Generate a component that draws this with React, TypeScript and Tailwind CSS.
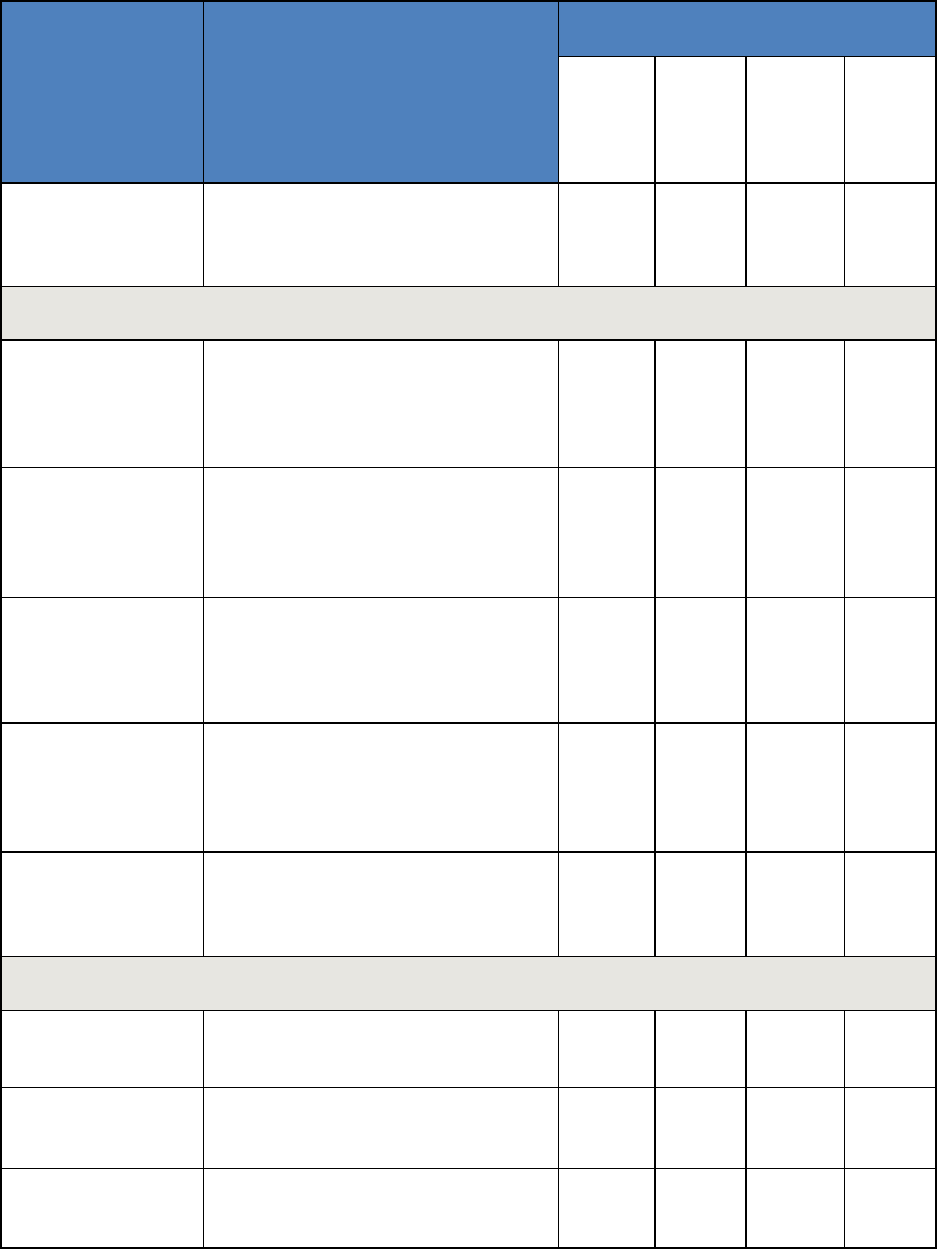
const rows: Array<{ h: string; section?: boolean; thick?: boolean }> = [
  { h: 'h-[103px]' },
  { h: 'h-[54px]', section: true, thick: true },
  { h: 'h-[127px]' },
  { h: 'h-[130px]' },
  { h: 'h-[126px]', thick: true },
  { h: 'h-[129px]', thick: true },
  { h: 'h-[104px]' },
  { h: 'h-[54px]', section: true },
  { h: 'h-[77px]' },
  { h: 'h-[81px]' },
  { h: 'h-[80px]', thick: true },
]

export default function App() {
  return (
    <div className="bg-white w-[937px] h-[1250px] font-['Liberation_Sans',sans-serif]">
      <table className="table-fixed border-collapse w-[936px] border-2 border-black">
        <colgroup>
          <col className="w-[202px]" />
          <col className="w-[355px]" />
          <col className="w-[97px]" />
          <col className="w-[91px]" />
          <col className="w-[98px]" />
          <col className="w-[92px]" />
        </colgroup>
        <thead>
          <tr className="h-[55px]">
            <th rowSpan={2} className="bg-[#4f81bd] border border-black border-b-2"></th>
            <th rowSpan={2} className="bg-[#4f81bd] border border-black border-b-2"></th>
            <th colSpan={4} className="bg-[#4f81bd] border border-black"></th>
          </tr>
          <tr className="h-[127px]">
            <th className="border border-black border-b-2 border-r-2"></th>
            <th className="border border-black border-b-2 border-r-2"></th>
            <th className="border border-black border-b-2"></th>
            <th className="border border-black border-b-2"></th>
          </tr>
        </thead>
        <tbody>
          {rows.map((r, i) =>
            r.section ? (
              <tr key={i} className={r.h}>
                <td
                  colSpan={6}
                  className={`bg-[#e7e6e1] border border-black ${r.thick ? 'border-b-2' : ''}`}
                ></td>
              </tr>
            ) : (
              <tr key={i} className={r.h}>
                <td className={`border border-black ${r.thick ? 'border-b-2' : ''}`}></td>
                <td className={`border border-black ${r.thick ? 'border-b-2' : ''}`}></td>
                <td className={`border border-black border-r-2 ${r.thick ? 'border-b-2' : ''}`}></td>
                <td className={`border border-black border-r-2 ${r.thick ? 'border-b-2' : ''}`}></td>
                <td className={`border border-black ${r.thick ? 'border-b-2' : ''}`}></td>
                <td className={`border border-black ${r.thick ? 'border-b-2' : ''}`}></td>
              </tr>
            )
          )}
        </tbody>
      </table>
    </div>
  )
}
